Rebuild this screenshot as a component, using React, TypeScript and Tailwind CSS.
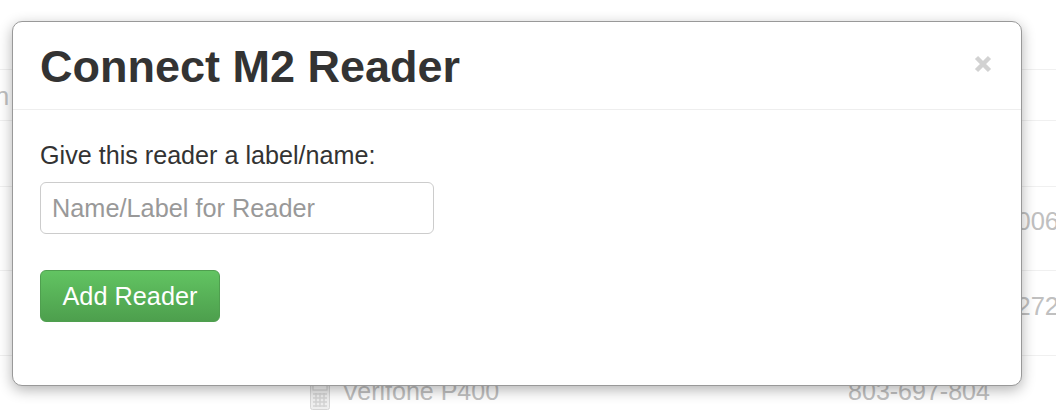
const rows = [
  { h: "h-[51px]", pt: "pt-[11px]", right: "", left: "n" },
  { h: "h-[66px]", pt: "pt-[11px]", right: "", left: "" },
  { h: "h-[84px]", pt: "pt-[19px]", right: "006", left: "" },
  { h: "h-[85px]", pt: "pt-[20px]", right: "272", left: "" },
];

const ReaderIcon = () => (
  <svg width="20" height="32" viewBox="0 0 20 32" className="shrink-0">
    <rect x="0.5" y="0.5" width="19" height="31" rx="2" fill="#eeeeee" stroke="#d6d6d6" />
    <rect x="3" y="3" width="14" height="9" fill="#f6f6f6" stroke="#cccccc" />
    <path d="M3 16h14M3 20h14M3 24h14M3 28h14M6 15v14M10 15v14M14 15v14" stroke="#d4d4d4" strokeWidth="1.5" />
  </svg>
);

const App = () => {
  return (
    <div className="relative h-[410px] w-[1056px] overflow-hidden bg-white font-['Liberation_Sans',Arial,sans-serif]">
      {/* page behind the dialog */}
      <div className="pt-[69px] text-[25.5px] leading-[30px] text-[#c0c0c0]">
        {rows.map((row, i) => (
          <div key={i} className={`flex items-start justify-between border-t border-[#f0f0f0] ${row.h} ${row.pt}`}>
            <span className="-ml-[5px]">{row.left}</span>
            <span className="-mr-[3px]">{row.right}</span>
          </div>
        ))}
        <div className="flex items-start border-t border-[#f0f0f0] pt-[22px] pl-[310px] text-[25px]">
          <ReaderIcon />
          <span className="ml-[12px] mt-[-2px]">Verifone P400</span>
          <span className="ml-[349px] mt-[-2px]">803-697-804</span>
        </div>
      </div>

      {/* dialog */}
      <div className="absolute top-[21px] left-[12px] h-[365px] w-[1010px] rounded-[10px] border border-[#999] bg-white shadow-[0_4px_14px_rgba(0,0,0,0.3)]">
        <div className="flex h-[88px] items-center justify-between border-b border-[#eeeeee] pr-[29px] pl-[27px]">
          <h3 className="pt-[3px] text-[45px] leading-[84px] font-bold text-[#333]">Connect M2 Reader</h3>
          <svg width="18" height="18" viewBox="0 0 18 18" className="mt-[-4px]">
            <path d="M2.5 2.5l13 13M15.5 2.5l-13 13" stroke="#d2d2d2" strokeWidth="4.5" />
          </svg>
        </div>
        <div className="px-[27px] pt-[27px]">
          <label className="block text-[25.15px] leading-[36px] text-[#333]">Give this reader a label/name:</label>
          <input
            placeholder="Name/Label for Reader"
            className="mt-[9px] block h-[52px] w-[394px] rounded-[6px] border border-[#cccccc] bg-white px-[11px] text-[25.3px] outline-none placeholder:text-[#999]"
          />
          <button className="mt-[36px] block h-[52px] w-[180px] rounded-[6px] border border-[#4f9f4f] bg-gradient-to-b from-[#62c462] to-[#4d9f4d] pt-[2px] text-[25.3px] text-white">
            Add Reader
          </button>
        </div>
      </div>
    </div>
  );
};

export default App;
